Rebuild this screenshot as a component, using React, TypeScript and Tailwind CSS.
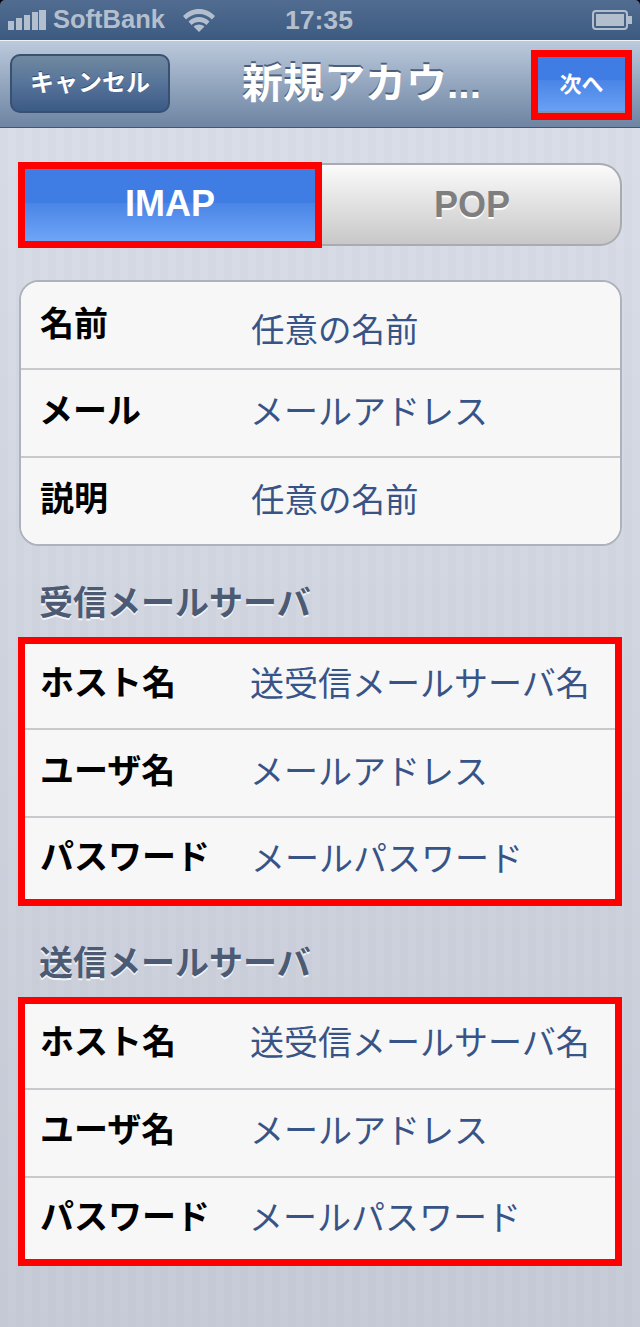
import React from "react";

interface Row {
  label: string;
  value: string;
  heightClass: string;
  labelClass?: string;
  valueClass?: string;
}

const accountRows: Row[] = [
  { label: "名前", value: "任意の名前", heightClass: "h-[86px]", labelClass: "pb-[2px] pl-[1px]", valueClass: "pt-[12px] text-[33.5px]" },
  { label: "メール", value: "メールアドレス", heightClass: "h-[88px]", labelClass: "pb-[4px] -ml-[1px]", valueClass: "pb-[2px] text-[34px]" },
  { label: "説明", value: "任意の名前", heightClass: "h-[88px]", labelClass: "pb-[4px]", valueClass: "text-[33.5px]" },
];

const incomingRows: Row[] = [
  { label: "ホスト名", value: "送受信メールサーバ名", heightClass: "h-[84px]", labelClass: "pb-[6px]", valueClass: "pb-[4px] text-[34px] -ml-[1px]" },
  { label: "ユーザ名", value: "メールアドレス", heightClass: "h-[88px]", labelClass: "pb-[4px]", valueClass: "pb-[2px] text-[34px] -ml-[1px]" },
  { label: "パスワード", value: "メールパスワード", heightClass: "h-[83px]", labelClass: "pb-[3px]", valueClass: "text-[34px]" },
];

const outgoingRows: Row[] = [
  { label: "ホスト名", value: "送受信メールサーバ名", heightClass: "h-[84px]", labelClass: "pb-[8px]", valueClass: "pb-[6px] text-[34px] -ml-[1px]" },
  { label: "ユーザ名", value: "メールアドレス", heightClass: "h-[88px]", labelClass: "pb-[6px]", valueClass: "pb-[4px] text-[34px] -ml-[1px]" },
  { label: "パスワード", value: "メールパスワード", heightClass: "h-[83px]", labelClass: "pb-[3px]", valueClass: "pb-[1px] text-[34px] -ml-[2px]" },
];

const SignalBars = () => (
  <svg width="38" height="20" viewBox="0 0 38 20" fill="#b4bfce">
    <rect x="0" y="11" width="6" height="9" />
    <rect x="8" y="8" width="6" height="12" />
    <rect x="16" y="5" width="6" height="15" />
    <rect x="24" y="2" width="6" height="18" />
    <rect x="31" y="0" width="7" height="20" />
  </svg>
);

const Wifi = () => (
  <svg width="32" height="23" viewBox="0 0 32 23" fill="#b4bfce">
    <path d="M16 0 C22 0 27.500 2.500 32 7 L29 10.500 C25.500 7 21 5 16 5 C11 5 6.500 7 3 10.500 L0 7 C4.500 2.500 10 0 16 0 Z" />
    <path d="M16 8 C20 8 23.500 9.500 26.500 12.500 L23.500 16 C21.500 14 19 13 16 13 C13 13 10.500 14 8.500 16 L5.500 12.500 C8.500 9.500 12 8 16 8 Z" />
    <path d="M16 23 L10.500 17.500 C12 16.200 14 15.500 16 15.500 C18 15.500 20 16.200 21.500 17.500 Z" />
  </svg>
);

const Battery = () => (
  <svg width="40" height="20" viewBox="0 0 40 20">
    <rect x="1" y="1" width="34" height="18" rx="3" fill="none" stroke="#b4bfce" strokeWidth="2" />
    <rect x="4" y="4" width="28" height="12" fill="#b4bfce" />
    <rect x="36" y="6" width="4" height="8" fill="#b4bfce" />
  </svg>
);

const FormRows = ({ rows, labelClass }: { rows: Row[]; labelClass: string }) => (
  <>
    {rows.map((row, i) => (
      <div
        key={row.label}
        className={`flex items-center bg-[#f7f7f7] ${row.heightClass} ${i > 0 ? "border-t-2 border-[#c8c9cc]" : ""}`}
      >
        <div className={`shrink-0 text-[34px] leading-none font-bold text-black ${labelClass} ${row.labelClass ?? ""}`}>
          {row.label}
        </div>
        <div className={`whitespace-nowrap leading-none text-[#385487] ${row.valueClass ?? ""}`}>
          {row.value}
        </div>
      </div>
    ))}
  </>
);

const SectionTitle = ({ children }: { children: React.ReactNode }) => (
  <h2 className="h-[91px] pt-[34px] pl-[21px] text-[34px] leading-[46px] font-bold text-[#4d5a73] [text-shadow:0_2px_0_#f2f4f7]">
    {children}
  </h2>
);

const App = () => {
  return (
    <div className="flex h-[1327px] w-[640px] flex-col overflow-hidden bg-black font-['Liberation_Sans','Noto_Sans_CJK_JP',sans-serif]">
      {/* Status bar */}
      <div className="flex h-[41px] shrink-0 items-center rounded-t-[5px] border-b border-[#eef1f5] bg-gradient-to-b from-[#526c91] to-[#3c5a80] pl-[8px] text-[#b4bfce]">
        <SignalBars />
        <span className="ml-[7px] text-[25.5px] leading-none font-bold">SoftBank</span>
        <span className="ml-[18px]">
          <Wifi />
        </span>
        <span className="ml-[70px] text-[26.6px] leading-none font-bold">17:35</span>
        <span className="ml-auto mr-[8px]">
          <Battery />
        </span>
      </div>

      {/* Navigation bar */}
      <div className="flex h-[87px] shrink-0 items-center border-b border-[#3f5679] bg-gradient-to-b from-[#bccadc] to-[#6d84a2] pl-[10px] pr-[8px]">
        <button className="mb-[2px] flex h-[59px] w-[160px] items-center justify-center rounded-[10px] border-2 border-[#3a5070] bg-gradient-to-b from-[#70899f] via-[#56739a] to-[#3b5a85] text-[24px] leading-none font-bold text-white [text-shadow:0_-1px_0_#2f4566]">
          キャンセル
        </button>
        <div className="flex-1 pl-[22px] text-center text-[41px] leading-none font-bold text-white [text-shadow:0_-2px_0_#4d5f78]">
          新規アカウ...
        </div>
        <button className="mt-[2px] h-[70px] w-[101px] border-[7px] border-[#ff0000] bg-[linear-gradient(#3f7ce3_0,#3f7ce3_41%,#4a85e6_41%,#6ba2f5_100%)] text-[22px] leading-none font-bold text-white [box-shadow:inset_0_-2px_0_#8a8f99]">
          次へ
        </button>
      </div>

      <div className="flex flex-1 flex-col bg-[repeating-linear-gradient(90deg,rgba(60,70,100,0.02)_0,rgba(60,70,100,0.02)_8px,transparent_8px,transparent_16px),linear-gradient(#d9dde7,#c6cbd7)] px-[18px]">
        {/* IMAP / POP */}
        <div className="mt-[34px] flex h-[86px] items-start">
          <div className="z-10 flex h-[86px] w-[304px] items-center justify-center border-[7px] border-[#ff0000] bg-[linear-gradient(#3f7ce3_0,#3f7ce3_47%,#4a85e6_47%,#6ea5f7_100%)] pb-[2px] text-[36px] leading-none font-bold text-white">
            IMAP
          </div>
          <div className="mt-[1px] flex h-[83px] flex-1 items-center justify-center rounded-r-[22px] border-2 border-l-0 border-[#a9abb0] bg-gradient-to-b from-[#fbfbfb] to-[#c8c8c8] pl-[2px] text-[36px] leading-none font-bold text-[#7f7f7f] [text-shadow:0_2px_0_#fff]">
            POP
          </div>
        </div>

        {/* Account details */}
        <div className="mt-[32px] ml-[1px] w-[603px] overflow-hidden rounded-[20px] border-2 border-[#aeb2bc] bg-[#f7f7f7]">
          <FormRows rows={accountRows} labelClass="w-[230px] pl-[19px]" />
        </div>

        <SectionTitle>受信メールサーバ</SectionTitle>
        <div className="w-[604px] border-[7px] border-[#ff0000]">
          <FormRows rows={incomingRows} labelClass="w-[226px] pl-[15px]" />
        </div>

        <SectionTitle>送信メールサーバ</SectionTitle>
        <div className="w-[604px] border-[7px] border-[#ff0000]">
          <FormRows rows={outgoingRows} labelClass="w-[226px] pl-[15px]" />
        </div>
      </div>
    </div>
  );
};

export default App;
